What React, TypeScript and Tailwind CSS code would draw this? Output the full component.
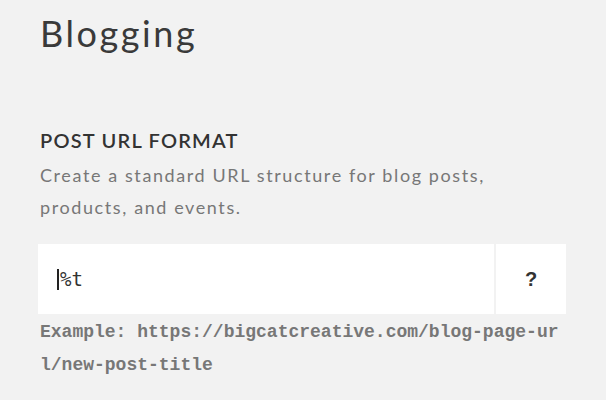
import React from "react";

export default function App() {
  return (
    <div className="w-full h-[400px] bg-[#f2f2f2] overflow-hidden pl-[38px] pr-[40px] font-['Lato','Open_Sans',sans-serif]">
      <h1 className="pt-[8px] pl-[2px] text-[36px] leading-[50px] text-[#3a3a3a] tracking-[2.6px]">Blogging</h1>

      <div className="mt-[70px] pl-[2px]">
        <h2 className="text-[20px] leading-[24px] font-semibold text-[#333] tracking-[1.2px]">POST URL FORMAT</h2>
        <p className="mt-[7px] text-[18px] leading-[32px] text-[#777] tracking-[1.6px]">
          Create a standard URL structure for blog posts,
          <br />
          products, and events.
        </p>
      </div>

      <div className="mt-[21px] flex h-[70px] gap-[2px]">
        <div className="flex-1 bg-white flex items-center pl-[19px]">
          <span className="w-[2px] h-[21px] bg-[#222] mr-[1px]" />
          <span className="font-['DejaVu_Sans_Mono',monospace] text-[19px] text-[#333]">%t</span>
        </div>
        <div className="w-[70px] bg-white flex items-center justify-center font-['Liberation_Sans',sans-serif] font-bold text-[20px] text-[#333]">
          ?
        </div>
      </div>

      <p className="mt-[2px] pl-[2px] font-['Liberation_Mono',monospace] font-bold text-[18px] leading-[33px] text-[#777] break-all">
        Example: https://bigcatcreative.com/blog-page-url/new-post-title
      </p>
    </div>
  );
}
